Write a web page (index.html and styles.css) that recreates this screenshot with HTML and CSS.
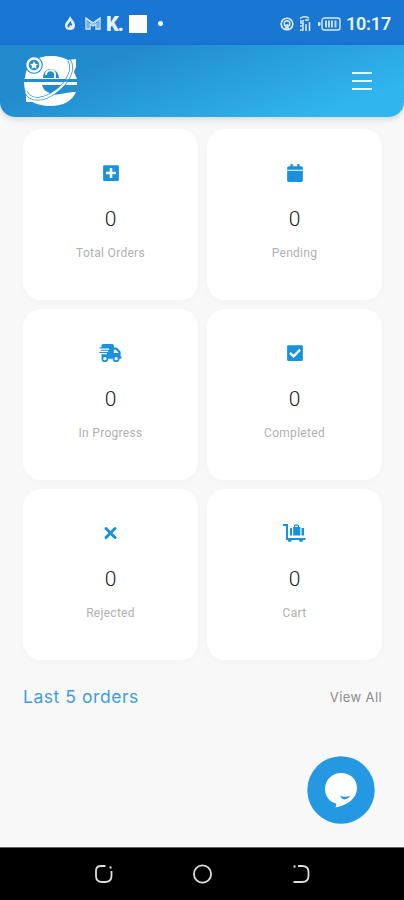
FILE: index.html
```html
<!DOCTYPE html>
<html lang="en">
	<head>
		<meta charset="UTF-8" />
		<meta name="viewport" content="width=device-width, initial-scale=1.0" />
		<title>Orders</title>
		<link rel="stylesheet" href="styles.css">
	</head>
	<body>
		<div class="statusbar">
			<div class="notifications">
				<svg width="12" height="15" viewBox="0 0 12 15">
					<path d="M6 0C7 3 11 5 11 9.500C11 12.500 9 14 6 14S1 12.500 1 9.500C1 6.500 4 5 6 0Z" fill="#e4f0ff" />
					<path d="M6.500 5C7 7 8.500 8 8 10L6.500 9L4 12C2.500 9 5 7.500 6.500 5Z" fill="#1976d2" />
				</svg>
				<svg width="16" height="13" viewBox="0 0 16 13">
					<path d="M1 12V1L8 6L15 1V12H11V7L8 9L5 7V12Z" fill="none" stroke="#d9eaff" stroke-width="1.300" />
					<path d="M3 3V11M13 3V11M4 4L8 7.500L12 4" fill="none" stroke="#d9eaff" stroke-width="1" />
				</svg>
				<span class="app">K.</span>
				<span class="square"></span>
				<span class="dot"></span>
			</div>
			<div class="system">
				<svg width="14" height="14" viewBox="0 0 14 14" fill="none" stroke="#e4f0ff">
					<circle cx="7" cy="7" r="5.800" stroke-width="1.600" />
					<circle cx="7" cy="6.500" r="2.800" stroke-width="1.400" />
					<path d="M7 7V11M5 11H9" stroke-width="1.500" />
				</svg>
				<svg class="signal" width="12" height="16" viewBox="0 0 12 16" fill="none" stroke="#d9eaff">
					<path d="M1 2.500Q5 -.5 10 2M1 5H5M6 4H10" stroke-width="1.500" />
					<path d="M1 7H4V10H1M1 14H4V11M7 8V15M10.500 6V15" stroke-width="1.500" />
				</svg>
				<svg class="battery" width="23" height="14" viewBox="0 0 23 14">
					<rect x="4" y="1" width="18" height="12" rx="2.500" fill="none" stroke="#d9eaff" stroke-width="1.400" />
					<rect x="0" y="5" width="2.500" height="4" rx="1" fill="#d9eaff" />
					<path d="M8 3.500V10.500M11 3.500V10.500M14 3.500V10.500M17.500 3.500V10.500" stroke="#c5ddfb" stroke-width="2" />
				</svg>
				<span class="time">10:17</span>
			</div>
		</div>
		<header class="header">
			<svg class="logo" width="54" height="52" viewBox="0 0 54 52">
				<path d="M1 23C2 9 11 1 27 1C35 1 40 3 44 5L52 4V12L50 17L53 24H0Z" fill="#fff" />
				<path d="M0 27H53V30H37L28 39C33 41 42 37 52 37C48 46 39 51 27 51C18 51 13 49 8 47H2V38Q0 33 0 27Z" fill="#fff" />
				<path d="M19 23C19 11 34 11 35 23Z" fill="#218ccf" />
				<path d="M18 30H42L30 39Q20 38 18 30Z" fill="#218ccf" />
				<path d="M22 20C22 14 30 14 31 19V24" fill="none" stroke="#fff" stroke-width="2" />
				<path d="M45 5C51 14 44 28 31 37C20 45 7 47 2 37" fill="none" stroke="#218ccf" stroke-width="3.600" />
				<path d="M45 5C51 14 44 28 31 37C20 45 7 47 2 37" fill="none" stroke="#fff" stroke-width="2.200" />
				<path d="M0 25.500H53" stroke="#218ccf" stroke-width="2.400" />
				<circle cx="10" cy="10" r="8.800" fill="#218ccf" />
				<circle cx="10" cy="10" r="6.500" fill="none" stroke="#fff" stroke-width="2.400" />
				<path d="M10 6L11.200 8.700L14 9L12 11L12.500 14L10 12.500L7.500 14L8 11L6 9L8.800 8.700Z" fill="#fff" />
			</svg>
			<div class="menu">
				<span></span>
				<span></span>
				<span></span>
			</div>
		</header>
		<main class="main">
			<div class="cards">
				<div class="card">
					<svg class="icon" width="16" height="18" viewBox="0 0 448 512">
						<path d="M30 32h388a30 30 0 0 1 30 30v388a30 30 0 0 1-30 30H30a30 30 0 0 1-30-30V62a30 30 0 0 1 30-30zm158 82v106H82v72h106v106h72v-106h106v-72h-106v-106z" />
					</svg>
					<div class="count">0</div>
					<div class="label">Total Orders</div>
				</div>
				<div class="card">
					<svg class="icon" width="16" height="18" viewBox="0 0 448 512">
						<path d="M0 464c0 26 21 48 48 48h352c27 0 48-22 48-48V192H0zM448 112v48H0v-48c0-26 22-48 48-48h48V12c0-7 5-12 12-12h40c7 0 12 5 12 12v52h128V12c0-7 5-12 12-12h40c7 0 12 5 12 12v52h48c26 0 48 22 48 48z" />
					</svg>
					<div class="count">0</div>
					<div class="label">Pending</div>
				</div>
				<div class="card">
					<svg class="icon" width="23" height="18" viewBox="0 0 640 512">
						<path fill-rule="evenodd" d="M112 0C85.500 0 64 21.500 64 48v48H16a16 16 0 0 0 0 32h256a16 16 0 0 1 0 32H48a16 16 0 0 0 0 32h192a16 16 0 0 1 0 32H16a16 16 0 0 0 0 32h192a16 16 0 0 1 0 32H64v128a96 96 0 0 0 192 0h128a96 96 0 0 0 192 0h32a32 32 0 0 0 0-64V237c0-17-6.700-33.300-18.700-45.300L512 114.700A64 64 0 0 0 466.700 96H416V48c0-26.500-21.500-48-48-48zM544 237v19H416v-96h50.700zM160 368a48 48 0 1 1 0 96 48 48 0 1 1 0-96zm272 48a48 48 0 1 1 96 0 48 48 0 1 1-96 0z" />
					</svg>
					<div class="count">0</div>
					<div class="label">In Progress</div>
				</div>
				<div class="card">
					<svg class="icon" width="16" height="18" viewBox="0 0 448 512">
						<path d="M30 32h388a30 30 0 0 1 30 30v388a30 30 0 0 1-30 30H30a30 30 0 0 1-30-30V62a30 30 0 0 1 30-30z" />
						<path d="M80 250L184 348L370 162" fill="none" stroke="#fff" stroke-width="68" />
					</svg>
					<div class="count">0</div>
					<div class="label">Completed</div>
				</div>
				<div class="card">
					<svg class="icon" width="13" height="18" viewBox="0 0 13 18">
						<path d="M2 4.500L11 13.500M11 4.500L2 13.500" fill="none" stroke="#1692e0" stroke-width="3" stroke-linecap="round" />
					</svg>
					<div class="count">0</div>
					<div class="label">Rejected</div>
				</div>
				<div class="card">
					<svg class="icon" width="23" height="18" viewBox="0 0 23 18">
						<path d="M0 1H4V15H22.500" fill="none" stroke="#1692e0" stroke-width="2" />
						<circle cx="6.700" cy="16" r="2" />
						<circle cx="18" cy="16" r="2" />
						<path d="M7 4H9V11.500H7ZM18.500 4H21V11.500H18.500Z" />
						<path fill-rule="evenodd" d="M10.200 11.500V3H11V1.500L12 .5H15L16 1.500V3H17.300V11.500ZM12.200 3H14.800V1.800H12.200Z" />
					</svg>
					<div class="count">0</div>
					<div class="label">Cart</div>
				</div>
			</div>
			<div class="orders">
				<div class="title">Last 5 orders</div>
				<div class="viewall">View All</div>
			</div>
		</main>
		<div class="chat">
			<svg width="68" height="68" viewBox="0 0 68 68">
				<circle cx="34" cy="34" r="33.700" fill="#2498e1" />
				<path d="M34 17C43.500 17 50 23.500 50 32C50 43 40 49 28.500 51.500L29.500 47.700C22.500 46 18 40 18 33C18 24 25 17 34 17Z" fill="#fff" />
				<path d="M32.500 40Q38 41.500 43.500 39.800Q38 47 32.500 40Z" fill="#2498e1" />
			</svg>
		</div>
		<div class="navbar">
			<svg width="20" height="20" viewBox="0 0 20 20" fill="none" stroke="#ddd" stroke-width="1.800">
				<path d="M12.500 2H8Q3 2 3 7V12Q3 18 9 18H12Q18.500 18 18.500 12V7" />
				<path d="M16.500 3.500H18.500" stroke-width="2.200" />
			</svg>
			<svg width="20" height="20" viewBox="0 0 20 20" fill="none" stroke="#ddd" stroke-width="1.800">
				<circle cx="10.500" cy="10" r="8.600" />
			</svg>
			<svg width="20" height="20" viewBox="0 0 20 20" fill="none" stroke="#ddd" stroke-width="1.800">
				<path d="M7 2H11Q17.500 2 17.500 8V12Q17.500 18 11 18H2.500" />
				<path d="M2.500 2.500H4.500" stroke-width="2.200" />
			</svg>
		</div>
	</body>
</html>
```
FILE: styles.css
```css
* {
	box-sizing: border-box;
}

body {
	margin: 0;
	height: 900px;
	display: flex;
	flex-direction: column;
	position: relative;
	background-color: #f8f8f8;
	font-family: Roboto, Arial, sans-serif;
	overflow: hidden;
}

.statusbar {
	height: 45px;
	flex: none;
	display: flex;
	justify-content: space-between;
	align-items: center;
	padding: 2px 13px 0 64px;
	background-color: #1976d2;
	color: #e9f3ff;
}

.notifications {
	display: flex;
	align-items: center;
}

.notifications svg + svg {
	margin-left: 9px;
}

.app {
	width: 18px;
	margin-left: 5px;
	font-size: 20px;
	font-weight: 900;
	line-height: 20px;
	letter-spacing: -1px;
}

.square {
	width: 18px;
	height: 18px;
	margin-left: 5px;
	background-color: #fff;
}

.dot {
	width: 5px;
	height: 5px;
	margin-left: 11px;
	border-radius: 50%;
	background-color: #fff;
}

.system {
	display: flex;
	align-items: center;
}

.signal {
	margin-left: 5px;
}

.battery {
	margin-left: 7px;
}

.time {
	margin-left: 5px;
	font-size: 18px;
	font-weight: 600;
	line-height: 20px;
	letter-spacing: -0.200px;
}

.system svg:first-child {
	margin-left: -1px;
}

.header {
	height: 72px;
	flex: none;
	display: flex;
	justify-content: space-between;
	align-items: center;
	padding: 0 32px 0 24px;
	border-radius: 0 0 15px 15px;
	background: linear-gradient(160deg, #228bcd 25%, #30b5ee 85%);
	box-shadow: 0 2px 6px rgba(0, 0, 0, 0.15);
}

.menu {
	width: 20px;
	display: flex;
	flex-direction: column;
	gap: 6px;
}

.menu span {
	height: 2px;
	background-color: #e8f8ff;
}

.main {
	flex: 1;
	padding: 12px 22px 0 23px;
}

.cards {
	display: grid;
	grid-template-columns: 1fr 1fr;
	gap: 9px;
}

.card {
	height: 171px;
	display: flex;
	flex-direction: column;
	align-items: center;
	padding-top: 35px;
	border-radius: 18px;
	background-color: #fff;
	box-shadow: 0 2px 8px rgba(0, 0, 0, 0.025);
}

.icon {
	flex: none;
	fill: #1692e0;
}

.count {
	margin-top: 24px;
	font-size: 21px;
	font-weight: 300;
	line-height: 26px;
	color: #222;
}

.label {
	margin-top: 13px;
	font-size: 12px;
	line-height: 16px;
	letter-spacing: 0.300px;
	color: #b0b0b0;
}

.orders {
	display: flex;
	justify-content: space-between;
	align-items: center;
	margin-top: 25px;
}

.title {
	font-family: Inter, sans-serif;
	font-size: 17.500px;
	line-height: 24px;
	letter-spacing: 0.550px;
	color: #3c9ddd;
}

.viewall {
	font-family: Inter, sans-serif;
	font-size: 13px;
	line-height: 22px;
	letter-spacing: 0.400px;
	color: #8c8c8c;
}

/* floating chat button */
.chat {
	position: absolute;
	right: 29px;
	bottom: 76px;
	width: 68px;
	height: 68px;
}

.navbar {
	height: 53px;
	flex: none;
	display: flex;
	justify-content: center;
	align-items: center;
	gap: 79px;
	border-top: 1px solid #666;
	background-color: #000;
}
```
